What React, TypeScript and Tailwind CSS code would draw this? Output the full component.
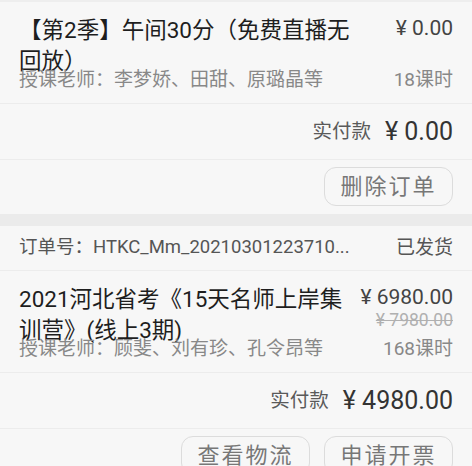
import React from "react";

const font = { fontFamily: '"Roboto", "Noto Sans CJK SC", sans-serif' };

function Item({
  title,
  teacher,
  price,
  original,
  lessons,
}: {
  title: string;
  teacher: string;
  price: string;
  original?: string;
  lessons: string;
}) {
  return (
    <div className="flex px-[19px] pt-[13px] pb-[10px] border-b border-[#ececec]">
      <div className="w-[336px] shrink-0">
        <div className="h-[52px] text-[22.5px] leading-[31px] text-[#1e1e1e]">{title}</div>
        <div className="text-[19px] leading-[26px] text-[#888] whitespace-nowrap">{teacher}</div>
      </div>
      <div className="flex-1 min-w-0 flex flex-col items-end whitespace-nowrap">
        <div className="text-[21px] leading-[26px] text-[#444]">{price}</div>
        {original && (
          <div className="text-[17.5px] leading-[20px] text-[#b0b0b0] line-through">{original}</div>
        )}
        <div className="mt-auto text-[19px] leading-[26px] text-[#888]">{lessons}</div>
      </div>
    </div>
  );
}

function Pay({ amount }: { amount: string }) {
  return (
    <div className="h-[56px] px-[19px] flex items-center justify-end border-b border-[#ececec]">
      <span className="text-[19.5px] text-[#5a5a5a]">实付款</span>
      <span className="ml-[14px] text-[25px] text-[#333]">{amount}</span>
    </div>
  );
}

function Btn({ label }: { label: string }) {
  return (
    <div className="h-[39px] w-[129px] rounded-[12px] border border-[#dcdcdc] flex items-center justify-center text-[22px] tracking-[2px] text-[#777]">
      {label}
    </div>
  );
}

export default function App() {
  return (
    <div className="w-[472px] h-[466px] overflow-hidden bg-[#f7f7f7]" style={font}>
      <div className="border-t-2 border-[#eeeeee]">
        <Item
          title="【第2季】午间30分（免费直播无回放）"
          teacher="授课老师：李梦娇、田甜、原璐晶等"
          price="¥ 0.00"
          lessons="18课时"
        />
        <Pay amount="¥ 0.00" />
        <div className="px-[19px] pt-[7px] pb-[8px] flex justify-end gap-[14px]">
          <Btn label="删除订单" />
        </div>
      </div>
      <div className="h-[12px] bg-[#ebebeb]" />
      <div>
        <div className="h-[45px] px-[19px] flex items-center justify-between border-b border-[#ececec] text-[19px] text-[#555] whitespace-nowrap">
          <span className="text-[18.5px]">订单号：HTKC_Mm_20210301223710...</span>
          <span>已发货</span>
        </div>
        <Item
          title="2021河北省考《15天名师上岸集训营》(线上3期)"
          teacher="授课老师：顾斐、刘有珍、孔令昂等"
          price="¥ 6980.00"
          original="¥ 7980.00"
          lessons="168课时"
        />
        <Pay amount="¥ 4980.00" />
        <div className="px-[19px] pt-[7px] pb-[8px] flex justify-end gap-[14px]">
          <Btn label="查看物流" />
          <Btn label="申请开票" />
        </div>
      </div>
    </div>
  );
}
